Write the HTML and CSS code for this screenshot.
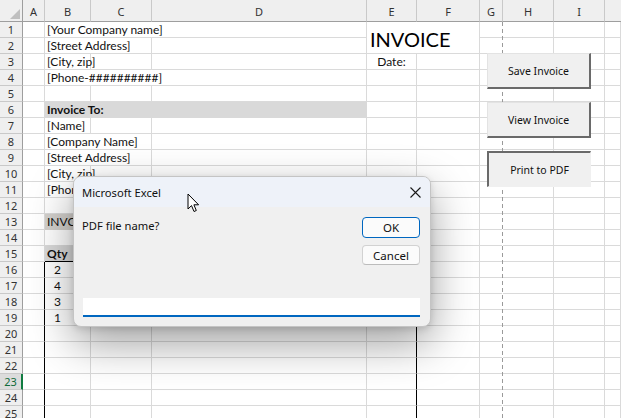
FILE: index.html
```html
<!DOCTYPE html>
<html>
<head>
<meta charset="utf-8">
<link rel="stylesheet" href="styles.css">
</head>
<body>
<div class="app">
  <div class="sheet">
    <div class="ch corner"><svg width="10" height="10" viewBox="0 0 10 10"><path d="M10 0 L10 10 L0 10 Z" fill="#bfbfbf"/></svg></div>
    <div class="ch">A</div><div class="ch">B</div><div class="ch">C</div><div class="ch">D</div><div class="ch">E</div><div class="ch">F</div><div class="ch">G</div><div class="ch">H</div><div class="ch">I</div><div class="ch last"></div>

    <div class="rh">1</div><div class="c"></div><div class="c s3">[Your Company name]</div><div class="c s2 r2 big">INVOICE</div><div class="c"></div><div class="c"></div><div class="c"></div><div class="c"></div>
    <div class="rh">2</div><div class="c"></div><div class="c s2">[Street Address]</div><div class="c"></div><div class="c"></div><div class="c"></div><div class="c"></div><div class="c"></div>
    <div class="rh">3</div><div class="c"></div><div class="c">[City, zip]</div><div class="c"></div><div class="c"></div><div class="c ctr">Date:</div><div class="c"></div><div class="c"></div><div class="c"></div><div class="c"></div><div class="c"></div>
    <div class="rh">4</div><div class="c"></div><div class="c s3">[Phone-##########]</div><div class="c"></div><div class="c"></div><div class="c"></div><div class="c"></div><div class="c"></div><div class="c"></div>
    <div class="rh">5</div><div class="c"></div><div class="c"></div><div class="c"></div><div class="c"></div><div class="c"></div><div class="c"></div><div class="c"></div><div class="c"></div><div class="c"></div><div class="c"></div>
    <div class="rh">6</div><div class="c"></div><div class="c s3 fill bold">Invoice To:</div><div class="c"></div><div class="c"></div><div class="c"></div><div class="c"></div><div class="c"></div><div class="c"></div>
    <div class="rh">7</div><div class="c"></div><div class="c">[Name]</div><div class="c"></div><div class="c"></div><div class="c"></div><div class="c"></div><div class="c"></div><div class="c"></div><div class="c"></div><div class="c"></div>
    <div class="rh">8</div><div class="c"></div><div class="c s2">[Company Name]</div><div class="c"></div><div class="c"></div><div class="c"></div><div class="c"></div><div class="c"></div><div class="c"></div><div class="c"></div>
    <div class="rh">9</div><div class="c"></div><div class="c s2">[Street Address]</div><div class="c"></div><div class="c"></div><div class="c"></div><div class="c"></div><div class="c"></div><div class="c"></div><div class="c"></div>
    <div class="rh">10</div><div class="c"></div><div class="c">[City, zip]</div><div class="c"></div><div class="c"></div><div class="c"></div><div class="c"></div><div class="c"></div><div class="c"></div><div class="c"></div><div class="c"></div>
    <div class="rh">11</div><div class="c"></div><div class="c s3">[Phone-##########]</div><div class="c"></div><div class="c"></div><div class="c"></div><div class="c"></div><div class="c"></div><div class="c"></div>
    <div class="rh">12</div><div class="c"></div><div class="c"></div><div class="c"></div><div class="c"></div><div class="c"></div><div class="c"></div><div class="c"></div><div class="c"></div><div class="c"></div><div class="c"></div>
    <div class="rh">13</div><div class="c"></div><div class="c s3 fill2">INVOICE DETAILS</div><div class="c"></div><div class="c"></div><div class="c"></div><div class="c"></div><div class="c"></div><div class="c"></div>
    <div class="rh">14</div><div class="c"></div><div class="c"></div><div class="c"></div><div class="c"></div><div class="c"></div><div class="c"></div><div class="c"></div><div class="c"></div><div class="c"></div><div class="c"></div>
    <div class="rh">15</div><div class="c"></div><div class="c fill bold bb">Qty</div><div class="c fill bb"></div><div class="c fill bb"></div><div class="c fill bb"></div><div class="c"></div><div class="c"></div><div class="c"></div><div class="c"></div><div class="c"></div>
    <div class="rh">16</div><div class="c br"></div><div class="c num">2</div><div class="c"></div><div class="c"></div><div class="c br"></div><div class="c"></div><div class="c"></div><div class="c"></div><div class="c"></div><div class="c"></div>
    <div class="rh">17</div><div class="c br"></div><div class="c num">4</div><div class="c"></div><div class="c"></div><div class="c br"></div><div class="c"></div><div class="c"></div><div class="c"></div><div class="c"></div><div class="c"></div>
    <div class="rh">18</div><div class="c br"></div><div class="c num">3</div><div class="c"></div><div class="c"></div><div class="c br"></div><div class="c"></div><div class="c"></div><div class="c"></div><div class="c"></div><div class="c"></div>
    <div class="rh">19</div><div class="c br"></div><div class="c num">1</div><div class="c"></div><div class="c"></div><div class="c br"></div><div class="c"></div><div class="c"></div><div class="c"></div><div class="c"></div><div class="c"></div>
    <div class="rh">20</div><div class="c br"></div><div class="c"></div><div class="c"></div><div class="c"></div><div class="c br"></div><div class="c"></div><div class="c"></div><div class="c"></div><div class="c"></div><div class="c"></div>
    <div class="rh">21</div><div class="c br"></div><div class="c"></div><div class="c"></div><div class="c"></div><div class="c br"></div><div class="c"></div><div class="c"></div><div class="c"></div><div class="c"></div><div class="c"></div>
    <div class="rh">22</div><div class="c br"></div><div class="c"></div><div class="c"></div><div class="c"></div><div class="c br"></div><div class="c"></div><div class="c"></div><div class="c"></div><div class="c"></div><div class="c"></div>
    <div class="rh sel">23</div><div class="c br"></div><div class="c"></div><div class="c"></div><div class="c"></div><div class="c br"></div><div class="c"></div><div class="c"></div><div class="c"></div><div class="c"></div><div class="c"></div>
    <div class="rh">24</div><div class="c br"></div><div class="c"></div><div class="c"></div><div class="c"></div><div class="c br"></div><div class="c"></div><div class="c"></div><div class="c"></div><div class="c"></div><div class="c"></div>
    <div class="rh">25</div><div class="c br"></div><div class="c"></div><div class="c"></div><div class="c"></div><div class="c br"></div><div class="c"></div><div class="c"></div><div class="c"></div><div class="c"></div><div class="c"></div>
  </div>

  <div class="pagebreak"></div>

  <div class="shape raised save">Save Invoice</div>
  <div class="shape raised view">View Invoice</div>
  <div class="shape pressed print">Print to PDF</div>

  <div class="dialog">
    <div class="titlebar">
      <span class="title">Microsoft Excel</span>
      <svg class="close" width="11" height="11" viewBox="0 0 11 11"><path d="M0.5 0.5 L10.5 10.5 M10.5 0.5 L0.5 10.5" stroke="#1a1a1a" stroke-width="1.1"/></svg>
    </div>
    <div class="dbody">
      <div class="drow">
        <div class="prompt">PDF file name?</div>
        <div class="dbuttons">
          <div class="btn ok">OK</div>
          <div class="btn cancel">Cancel</div>
        </div>
      </div>
      <div class="input"></div>
    </div>
  </div>

  <svg class="cursor" width="13" height="21" viewBox="0 0 13 21"><path d="M1 1 L1 16 L4.5 12.6 L7 18.5 L9.3 17.5 L6.9 11.8 L11.6 11.8 Z" fill="#fff" stroke="#000" stroke-width="1" stroke-linejoin="round"/></svg>
</div>
</body>
</html>
```

FILE: styles.css
```css
* { box-sizing: border-box; }
html, body { margin: 0; padding: 0; }
body {
  width: 621px;
  height: 418px;
  overflow: hidden;
  background: #fff;
}
.app {
  position: relative;
  width: 621px;
  height: 418px;
  overflow: hidden;
}
.sheet {
  display: grid;
  grid-template-columns: 23px 22px 46px 61px 215px 50px 63px 23px 51px 51px 16px;
  grid-template-rows: 22px repeat(25, 16px);
  font-family: Lato, "Liberation Sans", sans-serif;
  font-size: 12px;
  color: #111;
}
.ch {
  background: #efefef;
  border-right: 1px solid #c9c9c9;
  border-bottom: 1px solid #9e9e9e;
  font-family: "Noto Sans", "Liberation Sans", sans-serif;
  font-size: 11px;
  color: #333;
  display: flex;
  align-items: center;
  justify-content: center;
  padding-top: 1px;
}
.ch.corner {
  align-items: flex-end;
  justify-content: flex-end;
  padding: 0 2px 2px 0;
  border-right-color: #9e9e9e;
}
.ch.last { border-right: none; }
.rh {
  background: #efefef;
  border-right: 1px solid #9e9e9e;
  border-bottom: 1px solid #c9c9c9;
  font-family: "Noto Sans", "Liberation Sans", sans-serif;
  font-size: 11px;
  color: #333;
  display: flex;
  align-items: center;
  justify-content: center;
}
.rh.sel {
  background: #dcdcdc;
  color: #106b3a;
  border-right: 2px solid #107c41;
}
.c {
  border-right: 1px solid #dadada;
  border-bottom: 1px solid #dadada;
  padding: 0 2px;
  line-height: 15px;
  white-space: nowrap;
  overflow: visible;
}
.s2 { grid-column: span 2; }
.s3 { grid-column: span 3; }
.r2 { grid-row: span 2; }
.ctr { text-align: center; }
.num { padding-left: 9px; }
.bold { font-weight: bold; }
.fill { background: #d9d9d9; border-right-color: #d9d9d9; border-bottom-color: #d9d9d9; }
.fill2 { background: #d3d0cc; border-bottom-color: #d3d0cc; }
.bb { border-bottom: 1px solid #000; }
.br { border-right: 1px solid #000; }
.big {
  font-size: 20px;
  line-height: 31px;
  padding: 2px 0 0 3px;
  color: #000;
}

.pagebreak {
  position: absolute;
  left: 502px;
  top: 22px;
  width: 1px;
  height: 396px;
  background: repeating-linear-gradient(to bottom, #9a9a9a 0 4px, #fff 4px 7px);
}

.shape {
  position: absolute;
  left: 487px;
  width: 104px;
  height: 36px;
  background: #f0f0f0;
  font-family: "Noto Sans", "Liberation Sans", sans-serif;
  font-size: 10.5px;
  color: #111;
  display: flex;
  align-items: center;
  justify-content: center;
}
.raised {
  border-top: 1px solid #e3e3e3;
  border-left: 1px solid #e3e3e3;
  border-right: 2px solid #6a6a6a;
  border-bottom: 2px solid #6a6a6a;
}
.pressed {
  border-top: 2px solid #6a6a6a;
  border-left: 2px solid #6a6a6a;
  border-right: 1px solid #f0f0f0;
  border-bottom: 1px solid #f0f0f0;
}
.save { top: 53px; }
.view { top: 102px; }
.print { top: 151px; }

.dialog {
  position: absolute;
  left: 73px;
  top: 176px;
  width: 358px;
  height: 151px;
  border: 1px solid #c4c4c4;
  border-radius: 8px;
  background: #f0f0f0;
  box-shadow: 0 16px 44px rgba(0, 0, 0, 0.38), 0 2px 6px rgba(0, 0, 0, 0.12);
  display: flex;
  flex-direction: column;
  overflow: hidden;
  font-family: "Noto Sans", "Liberation Sans", sans-serif;
  color: #111;
}
.titlebar {
  height: 30px;
  background: #eef2f9;
  display: flex;
  align-items: center;
  justify-content: space-between;
  padding: 0 9px 0 8px;
}
.title { font-size: 11.2px; }
.dbody {
  flex: 1;
  display: flex;
  flex-direction: column;
  padding: 10px 10px 9px 8px;
}
.drow {
  display: flex;
  justify-content: space-between;
}
.prompt { font-size: 11.2px; line-height: 15px; padding-top: 1px; }
.dbuttons {
  display: flex;
  flex-direction: column;
  gap: 7px;
}
.btn {
  width: 58px;
  height: 21px;
  border-radius: 4px;
  background: #fbfbfb;
  font-size: 11.5px;
  display: flex;
  align-items: center;
  justify-content: center;
}
.ok { border: 1px solid #0067c0; }
.cancel { height: 20px; border: 1px solid #d2d2d2; border-bottom-color: #bcbcbc; }
.input {
  margin-top: auto;
  height: 19px;
  background: #fff;
  border-bottom: 2px solid #0067c0;
  margin-left: 1px;
}
.cursor {
  position: absolute;
  left: 187px;
  top: 193px;
}
```
